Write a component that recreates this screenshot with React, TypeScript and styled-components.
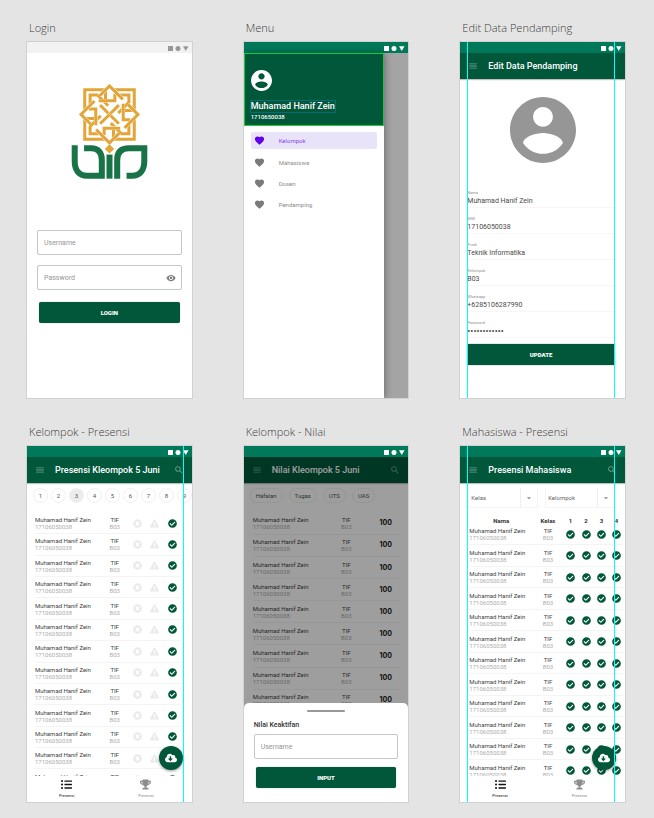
import React from 'react';
import styled, { createGlobalStyle } from 'styled-components';
import { MdMenu, MdSearch, MdVisibility, MdFavorite, MdArrowDropDown } from 'react-icons/md';
import {
  FaCheckCircle,
  FaTimesCircle,
  FaExclamationTriangle,
  FaCloudDownloadAlt,
  FaListUl,
  FaTrophy,
} from 'react-icons/fa';

const green = '#00573a';
const statusGreen = '#00795a';
const cyan = '#00ffff';

const GlobalStyle = createGlobalStyle`
  * { box-sizing: border-box; }
  body { margin: 0; background: #e4e4e4; font-family: Roboto, "Liberation Sans", sans-serif; }
  button, input, select { font-family: inherit; margin: 0; }
`;

const Canvas = styled.main`
  display: grid;
  grid-template-columns: repeat(3, minmax(0, 1fr));
  column-gap: 52px;
  row-gap: 22px;
  padding: 16px 29px 16px 27px;
`;

const BoardColumn = styled.section`
  display: flex;
  flex-direction: column;
`;

const BoardTitle = styled.h2`
  margin: 0;
  padding: 0 2px;
  height: 26px;
  font: 300 11px/24px "Open Sans", "Noto Sans", sans-serif;
  color: #3c3c3c;
  white-space: nowrap;
`;

const Board = styled.div`
  position: relative;
  display: flex;
  flex-direction: column;
  height: 356px;
  overflow: hidden;
  background: #fff;
  outline: 1px solid #d0d2d1;
`;

const Guide = styled.i<{ $left?: number; $right?: number }>`
  position: absolute;
  z-index: 5;
  top: 0;
  bottom: 0;
  width: 1px;
  background: ${cyan};
  ${(p) => (p.$left !== undefined ? `left: ${p.$left}px;` : `right: ${p.$right}px;`)}
`;

const StatusBar = styled.div<{ $light?: boolean }>`
  display: flex;
  flex: none;
  justify-content: flex-end;
  height: 11px;
  padding-right: 3px;
  background: ${(p) => (p.$light ? '#f2f2f2' : statusGreen)};
  color: ${(p) => (p.$light ? '#989898' : '#fff')};
`;

const AppBar = styled.header`
  display: flex;
  flex: none;
  align-items: center;
  height: 26px;
  padding: 0 8px;
  background: ${green};
  color: #fff;
  box-shadow: 0 1px 1px rgba(0, 0, 0, 0.25);
`;

const AppTitle = styled.h1`
  flex: 1;
  margin: 0 0 0 10px;
  font-size: 9px;
  font-weight: 500;
  line-height: 12px;
  white-space: nowrap;
`;

const IconButton = styled.button`
  display: flex;
  padding: 0;
  border: 0;
  background: none;
  color: #6da28f;
  font-size: 10px;
`;

const OutlinedField = styled.label`
  display: flex;
  align-items: center;
  height: 25px;
  padding: 0 5px 0 6px;
  border: 1px solid #c6c6c6;
  border-radius: 2px;
  color: #808080;
  font-size: 10px;
`;

const FieldInput = styled.input`
  flex: 1;
  min-width: 0;
  padding: 0;
  border: 0;
  outline: 0;
  background: none;
  font-size: 7px;
  line-height: 10px;
  color: #444;
  &::placeholder { color: #959595; opacity: 1; }
`;

const FilledButton = styled.button<{ $square?: boolean }>`
  height: 21px;
  padding: 0;
  border: 0;
  border-radius: ${(p) => (p.$square ? 0 : 2)}px;
  background: ${green};
  color: #fff;
  font-size: 6px;
  font-weight: 900;
  line-height: 10px;
  box-shadow: 0 0 1px rgba(0, 0, 0, 0.5);
`;

const LoginForm = styled.form`
  display: flex;
  flex-direction: column;
  gap: 10px;
  padding: 0 10px;
  margin-top: 51px;
  & > button { margin: 2px 2px 0; }
`;

const LogoArea = styled.div`
  display: flex;
  justify-content: center;
  padding-top: 31px;
`;

const DrawerStage = styled.div`
  display: flex;
  flex: 1;
  background: #a4a4a4;
`;

const Drawer = styled.nav`
  width: 85%;
  background: #fff;
  box-shadow: 1px 0 7px rgba(0, 0, 0, 0.35);
`;

const DrawerHeader = styled.div`
  display: flex;
  flex-direction: column;
  align-items: flex-start;
  height: 73px;
  padding: 16px 6px 0;
  border: 1px solid #19c93b;
  background: ${green};
  color: #fff;
`;

const DrawerName = styled.strong`
  margin-top: 10px;
  font-size: 9px;
  font-weight: 500;
  line-height: 11px;
  outline: 1px solid #086c73;
  white-space: nowrap;
`;

const DrawerNumber = styled.span`
  margin-top: 1px;
  font-size: 6px;
  font-weight: 500;
  line-height: 8px;
`;

const DrawerList = styled.div`
  display: flex;
  flex-direction: column;
  gap: 4px;
  padding: 6px 7px;
`;

const DrawerLink = styled.a<{ $active?: boolean }>`
  display: flex;
  align-items: center;
  gap: 14px;
  height: 17px;
  margin-bottom: ${(p) => (p.$active ? 1 : 0)}px;
  padding-left: 3px;
  border-radius: 2px;
  color: ${(p) => (p.$active ? '#6200ee' : '#7a7a7a')};
  background: ${(p) => (p.$active ? '#e9e3fa' : 'none')};
  font-size: 11px;
  text-decoration: none;
  span {
    font-size: 6px;
    line-height: 8px;
    color: ${(p) => (p.$active ? '#8a45ee' : '#8c8c8c')};
  }
`;

const AvatarArea = styled.div`
  display: flex;
  justify-content: center;
  padding: 18px 0 19px;
`;

const EditForm = styled.form`
  display: flex;
  flex-direction: column;
  padding: 0 10px 0 7px;
  & > button { margin-top: 6px; }
`;

const LineField = styled.label`
  display: flex;
  flex-direction: column;
  gap: 1px;
  height: 26px;
  justify-content: flex-end;
  padding-bottom: 1px;
  border-bottom: 1px solid #f7f7f7;
  font-size: 4px;
  line-height: 5px;
  color: #8e8e8e;
  input {
    flex: none;
    height: 10px;
    font-size: 7px;
    color: #4a4a4a;
  }
  input[type='password'] { font-size: 9px; }
`;

const RoundChips = styled.div`
  display: flex;
  flex: none;
  gap: 3px;
  padding: 5px 0 0 6px;
`;

const WideChips = styled.div`
  display: flex;
  flex: none;
  gap: 6px;
  padding: 5px 0 0 6px;
`;

const Chip = styled.button<{ $active?: boolean; $wide?: boolean }>`
  flex: none;
  height: 15px;
  ${(p) => (p.$wide ? 'padding: 0 5px;' : 'width: 15px; padding: 0;')}
  border: 1px solid #f0f0f0;
  border-radius: 8px;
  background: ${(p) => (p.$active ? '#ececec' : '#fff')};
  font-size: 6px;
  line-height: 8px;
  color: #555;
`;

const TableWrap = styled.div<{ $gap: number }>`
  flex: 1;
  min-height: 0;
  overflow: hidden;
  padding-top: ${(p) => p.$gap}px;
`;

const Table = styled.table<{ $height: number; $inset: number; $end: number }>`
  width: calc(100% - ${(p) => p.$inset + p.$end}px);
  height: ${(p) => p.$height}px;
  margin-left: ${(p) => p.$inset}px;
  border-collapse: collapse;
  table-layout: fixed;
  font-size: 6px;
  line-height: 7px;
  th {
    height: 8px;
    padding: 0;
    font-weight: 700;
    color: #333;
  }
  td {
    padding: 0;
    border-bottom: 1px solid #f4f4f4;
    text-align: center;
    white-space: nowrap;
    color: #adadad;
  }
  td:first-child { text-align: left; }
  b { display: block; font-weight: 400; color: #444; }
`;

const Col = styled.col<{ $w?: number }>`
  ${(p) => p.$w && `width: ${p.$w}px;`}
`;

const Mark = styled.span<{ $tone: 'on' | 'off' }>`
  display: flex;
  justify-content: center;
  font-size: 9px;
  color: ${(p) => (p.$tone === 'on' ? green : '#eaeaea')};
`;

const Score = styled.strong`
  display: block;
  font: 700 7px/8px Inter, Roboto, sans-serif;
  color: #222;
`;

const BottomNav = styled.nav`
  display: flex;
  flex: none;
  height: 26px;
  padding-right: 6px;
  background: #fff;
`;

const NavLink = styled.a<{ $active?: boolean }>`
  display: flex;
  flex: 1;
  flex-direction: column;
  align-items: center;
  gap: 3px;
  padding-top: 3px;
  font-size: 11px;
  text-decoration: none;
  color: ${(p) => (p.$active ? '#111' : '#8d8d8d')};
  span { font-size: 4px; line-height: 5px; }
`;

const Fab = styled.button<{ $right: number }>`
  position: absolute;
  right: ${(p) => p.$right}px;
  bottom: 32px;
  display: flex;
  align-items: center;
  justify-content: center;
  width: 24px;
  height: 24px;
  padding: 0;
  border: 0;
  border-radius: 50%;
  background: ${green};
  color: #fff;
  font-size: 12px;
  box-shadow: 0 1px 3px rgba(0, 0, 0, 0.4);
`;

const Filters = styled.div`
  display: grid;
  flex: none;
  grid-template-columns: 1fr 1fr;
  gap: 7px;
  padding: 5px 10px 0 8px;
`;

const SelectBox = styled.label`
  display: grid;
  grid-template-columns: minmax(0, 1fr) 16px;
  height: 20px;
  border: 1px solid #f4f4f4;
  border-width: 0 1px 1px;
  color: #8a8a8a;
  select {
    appearance: none;
    padding: 0 2px;
    border: 0;
    border-right: 1px solid #eee;
    border-radius: 0;
    background: none;
    font-size: 6px;
    color: #666;
  }
  svg { place-self: center; font-size: 10px; }
`;

const Scrim = styled.div`
  position: absolute;
  inset: 11px 0 0;
  background: rgba(0, 0, 0, 0.38);
`;

const Sheet = styled.form`
  position: absolute;
  inset: auto 0 0;
  display: flex;
  flex-direction: column;
  height: 99px;
  padding: 7px 10px 0;
  border-radius: 5px 5px 0 0;
  background: #fff;
  & > button { margin: 8px 2px 0; }
`;

const Handle = styled.i`
  align-self: center;
  width: 38px;
  height: 2px;
  margin-bottom: 8px;
  border-radius: 1px;
  background: #999;
`;

const SheetTitle = styled.h3`
  margin: 0 0 4px;
  font-size: 7px;
  font-weight: 500;
  line-height: 10px;
  color: #333;
`;

function SystemIcons() {
  return (
    <svg width="22" height="11" viewBox="0 0 22 11" fill="currentColor" aria-hidden="true">
      <rect x="1" y="4" width="5" height="5" />
      <circle cx="11" cy="6.500" r="2.500" />
      <path d="M16 4.200h5.500L18.750 9z" />
    </svg>
  );
}

function Avatar({ size, color }: { size: number; color: string }) {
  return (
    <svg width={size} height={size} viewBox="2 2 20 20" fill={color} aria-hidden="true">
      <path d="M12 2C6.480 2 2 6.480 2 12s4.480 10 10 10 10-4.480 10-10S17.520 2 12 2zm0 3c1.660 0 3 1.340 3 3s-1.340 3-3 3-3-1.340-3-3 1.340-3 3-3zm0 14.200c-2.500 0-4.710-1.280-6-3.220.030-1.990 4-3.080 6-3.080 1.990 0 5.970 1.090 6 3.080-1.290 1.940-3.500 3.220-6 3.220z" />
    </svg>
  );
}

const knotStrands = [
  'M-74 -12V-74H-12V-40',
  'M-58 -30V-58H-36L-4 -26',
  'M-32 -41H16V-62',
  'M-30 -55L0 -85L40 -45',
  'M-28 -28L0 0',
];

function Logo() {
  return (
    <svg width="77" height="95" viewBox="153 207 230 284" fill="none" aria-label="UIN">
      {knotStrands.map((d) => (
        <React.Fragment key={d}>
          {[0, 90, 180, 270].map((angle) => (
            <g key={angle} transform={`translate(268 298) rotate(${angle})`}>
              <path d={d} stroke="#fff" strokeWidth="11" />
              <path d={d} stroke="#e3a438" strokeWidth="9" />
            </g>
          ))}
        </React.Fragment>
      ))}
      <path d="M268 387l14 14-14 14-14-14z" fill="#e3a438" />
      <g stroke="#187347" strokeWidth="18">
        <path d="M164 390V438C164 466 178 481 200 481H245V434C245 410 232 399 214 399H192" />
        <path d="M268 418V490" />
        <path d="M291 490V434C291 410 304 399 326 399H372V438C372 466 358 481 336 481H319" />
      </g>
    </svg>
  );
}

function Artboard({ title, children }: { title: string; children: React.ReactNode }) {
  return (
    <BoardColumn>
      <BoardTitle>{title}</BoardTitle>
      <Board>{children}</Board>
    </BoardColumn>
  );
}

function Status({ light }: { light?: boolean }) {
  return (
    <StatusBar $light={light}>
      <SystemIcons />
    </StatusBar>
  );
}

function TopBar({ title, search }: { title: string; search?: boolean }) {
  return (
    <AppBar>
      <IconButton type="button" aria-label="Menu"><MdMenu /></IconButton>
      <AppTitle>{title}</AppTitle>
      {search && <IconButton type="button" aria-label="Search"><MdSearch /></IconButton>}
    </AppBar>
  );
}

function StudentCells() {
  return (
    <>
      <td><b>Muhamad Hanif Zein</b>17106050038</td>
      <td><b>TIF</b>B03</td>
    </>
  );
}

function Tabs() {
  return (
    <BottomNav>
      <NavLink href="#presensi" $active><FaListUl /><span>Presensi</span></NavLink>
      <NavLink href="#nilai"><FaTrophy /><span>Presensi</span></NavLink>
    </BottomNav>
  );
}

const rows = (n: number) => Array.from({ length: n }, (_, i) => i);

const profile = [
  ['Nama', 'Muhamad Hanif Zein'],
  ['NIM', '17106050038'],
  ['Prodi', 'Teknik Informatika'],
  ['Kelompok', 'B03'],
  ['Whatsapp', '+6285106287990'],
  ['Password', '************'],
];

export default function App() {
  return (
    <>
      <GlobalStyle />
      <Canvas>
        <Artboard title="Login">
          <Status light />
          <LogoArea><Logo /></LogoArea>
          <LoginForm>
            <OutlinedField><FieldInput placeholder="Username" aria-label="Username" /></OutlinedField>
            <OutlinedField>
              <FieldInput type="password" placeholder="Password" aria-label="Password" />
              <MdVisibility />
            </OutlinedField>
            <FilledButton type="button">LOGIN</FilledButton>
          </LoginForm>
        </Artboard>

        <Artboard title="Menu">
          <Status />
          <DrawerStage>
            <Drawer>
              <DrawerHeader>
                <Avatar size={21} color="#fff" />
                <DrawerName>Muhamad Hanif Zein</DrawerName>
                <DrawerNumber>1710650038</DrawerNumber>
              </DrawerHeader>
              <DrawerList>
                {['Kelompok', 'Mahasiswa', 'Dosen', 'Pendamping'].map((item, i) => (
                  <DrawerLink key={item} href={`#${item}`} $active={i === 0}>
                    <MdFavorite />
                    <span>{item}</span>
                  </DrawerLink>
                ))}
              </DrawerList>
            </Drawer>
          </DrawerStage>
        </Artboard>

        <Artboard title="Edit Data Pendamping">
          <Status />
          <TopBar title="Edit Data Pendamping" />
          <AvatarArea><Avatar size={66} color="#969696" /></AvatarArea>
          <EditForm>
            {profile.map(([label, value]) => (
              <LineField key={label}>
                {label}
                <FieldInput type={label === 'Password' ? 'password' : 'text'} defaultValue={value} />
              </LineField>
            ))}
            <FilledButton type="button" $square>UPDATE</FilledButton>
          </EditForm>
          <Guide $left={7} />
          <Guide $right={10} />
        </Artboard>

        <Artboard title="Kelompok - Presensi">
          <Status />
          <TopBar title="Presensi Kleompok 5 Juni" search />
          <RoundChips>
            {rows(9).map((i) => <Chip key={i} type="button" $active={i === 2}>{i + 1}</Chip>)}
          </RoundChips>
          <TableWrap $gap={10}>
            <Table $height={278} $inset={8} $end={11}>
              <colgroup><Col /><Col $w={30} /><Col $w={16} /><Col $w={18} /><Col $w={17} /></colgroup>
              <tbody>
                {rows(13).map((i) => (
                  <tr key={i}>
                    <StudentCells />
                    <td><Mark $tone="off"><FaTimesCircle /></Mark></td>
                    <td><Mark $tone="off"><FaExclamationTriangle /></Mark></td>
                    <td><Mark $tone="on"><FaCheckCircle /></Mark></td>
                  </tr>
                ))}
              </tbody>
            </Table>
          </TableWrap>
          <Tabs />
          <Fab type="button" $right={9} aria-label="Download"><FaCloudDownloadAlt /></Fab>
          <Guide $right={8} />
        </Artboard>

        <Artboard title="Kelompok - Nilai">
          <Status />
          <TopBar title="Nilai Kleompok 5 Juni" search />
          <WideChips>
            {['Hafalan', 'Tugas', 'UTS', 'UAS'].map((c) => <Chip key={c} type="button" $wide>{c}</Chip>)}
          </WideChips>
          <TableWrap $gap={10}>
            <Table $height={243} $inset={9} $end={7}>
              <colgroup><Col /><Col $w={48} /><Col $w={31} /></colgroup>
              <tbody>
                {rows(11).map((i) => (
                  <tr key={i}><StudentCells /><td><Score>100</Score></td></tr>
                ))}
              </tbody>
            </Table>
          </TableWrap>
          <Scrim />
          <Sheet>
            <Handle />
            <SheetTitle>Nilai Keaktifan</SheetTitle>
            <OutlinedField><FieldInput placeholder="Username" aria-label="Nilai Keaktifan" /></OutlinedField>
            <FilledButton type="button">INPUT</FilledButton>
          </Sheet>
        </Artboard>

        <Artboard title="Mahasiswa - Presensi">
          <Status />
          <TopBar title="Presensi Mahasiswa" search />
          <Filters>
            {['Kelas', 'Kelompok'].map((f) => (
              <SelectBox key={f}>
                <select aria-label={f}><option>{f}</option></select>
                <MdArrowDropDown />
              </SelectBox>
            ))}
          </Filters>
          <TableWrap $gap={8}>
            <Table $height={266} $inset={9} $end={1}>
              <colgroup><Col /><Col $w={30} /><Col $w={15} /><Col $w={16} /><Col $w={15} /><Col $w={15} /></colgroup>
              <thead>
                <tr>{['Nama', 'Kelas', '1', '2', '3', '4'].map((h) => <th key={h}>{h}</th>)}</tr>
              </thead>
              <tbody>
                {rows(12).map((i) => (
                  <tr key={i}>
                    <StudentCells />
                    {rows(4).map((m) => <td key={m}><Mark $tone="on"><FaCheckCircle /></Mark></td>)}
                  </tr>
                ))}
              </tbody>
            </Table>
          </TableWrap>
          <Tabs />
          <Fab type="button" $right={9} aria-label="Download"><FaCloudDownloadAlt /></Fab>
          <Guide $left={7} />
          <Guide $right={10} />
        </Artboard>
      </Canvas>
    </>
  );
}
